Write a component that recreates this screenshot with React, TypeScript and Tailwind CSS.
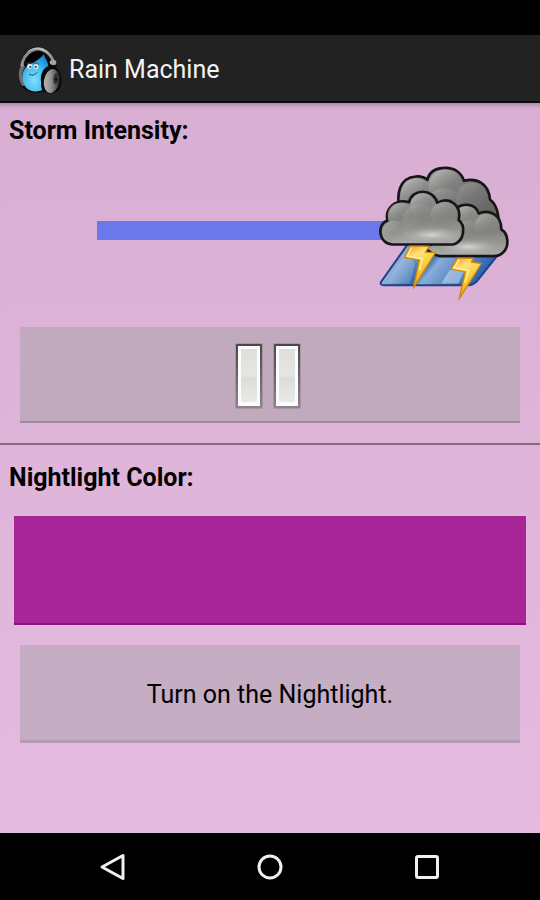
import React, { useState } from 'react';

function AppIcon() {
    return (
        <svg viewBox="24 15 138 144" className="h-12 w-[46px]" aria-hidden="true">
            <defs>
                <radialGradient id="drop" cx="0.45" cy="0.7" r="0.7">
                    <stop offset="0" stopColor="#84defc" />
                    <stop offset="0.5" stopColor="#4cc0f0" />
                    <stop offset="1" stopColor="#158cd0" />
                </radialGradient>
                <linearGradient id="band" x1="0" y1="0" x2="1" y2="0.4">
                    <stop offset="0" stopColor="#6a6a6a" />
                    <stop offset="0.5" stopColor="#b0b0b0" />
                    <stop offset="1" stopColor="#8a8a8a" />
                </linearGradient>
                <linearGradient id="ear" x1="0" y1="0.6" x2="1" y2="0.3">
                    <stop offset="0" stopColor="#b4b4b4" />
                    <stop offset="0.4" stopColor="#969696" />
                    <stop offset="1" stopColor="#2c2c2c" />
                </linearGradient>
            </defs>
            <path d="M36 132 C20 100 32 74 42 64 C48 30 88 10 118 32 C132 42 140 56 140 74 L104 152 C76 160 46 150 36 132Z" fill="#050505" />
            <path d="M42 66 C26 82 24 112 40 136 L50 132 C38 108 38 92 48 78Z" fill="#6d6d6d" />
            <path d="M104 40 C110 56 120 66 118 82 C104 94 90 128 100 148 C78 156 54 150 46 132 C36 114 40 86 54 76 C72 66 92 56 104 40Z" fill="url(#drop)" />
            <path d="M42 68 C48 32 84 12 112 34 C128 46 134 58 136 78" fill="none" stroke="#111" strokeWidth="16" />
            <path d="M38 76 C44 30 84 12 112 32 C127 44 134 56 136 72" fill="none" stroke="url(#band)" strokeWidth="9" />
            <path d="M56 32 C72 18 98 18 116 36" fill="none" stroke="#c4c4c4" strokeWidth="3" />
            <ellipse cx="132" cy="64" rx="10" ry="8" fill="#a4a4a4" />
            <path d="M96 122 C92 94 110 70 132 74 C158 80 166 128 148 148 C134 162 106 160 100 144Z" fill="#0a0a0a" />
            <ellipse cx="128" cy="120" rx="23" ry="36" transform="rotate(10 128 120)" fill="url(#ear)" />
            <ellipse cx="142" cy="112" rx="9" ry="17" transform="rotate(10 142 112)" fill="#333" />
            <ellipse cx="141" cy="115" rx="3" ry="5" fill="#111" />
            <ellipse cx="62" cy="76" rx="8" ry="8" fill="#cfe6ee" />
            <ellipse cx="81" cy="77" rx="7" ry="8" fill="#cfe6ee" />
            <circle cx="64" cy="78" r="3" fill="#333" />
            <circle cx="80" cy="78" r="3" fill="#333" />
            <path d="M52 69 Q60 62 69 68 M75 68 Q84 62 90 70" fill="none" stroke="#0f5f8c" strokeWidth="3" />
            <path d="M60 99 Q74 108 84 94" fill="none" stroke="#1d4e6e" strokeWidth="3" />
        </svg>
    );
}

function StormCloud() {
    return (
        <svg viewBox="24 24 390 405" className="h-[135px] w-[130px] overflow-visible" aria-hidden="true">
            <defs>
                <linearGradient id="back" x1="0" y1="0" x2="0.8" y2="1">
                    <stop offset="0" stopColor="#a8a8a6" />
                    <stop offset="0.45" stopColor="#7b7c79" />
                    <stop offset="1" stopColor="#5c5d5a" />
                </linearGradient>
                <linearGradient id="front" x1="0" y1="0" x2="0" y2="1">
                    <stop offset="0" stopColor="#8f908d" />
                    <stop offset="0.5" stopColor="#82837f" />
                    <stop offset="1" stopColor="#acacaa" />
                </linearGradient>
                <linearGradient id="puff" x1="0" y1="0" x2="0.7" y2="1">
                    <stop offset="0" stopColor="#d2d2d0" stopOpacity="0.8" />
                    <stop offset="0.6" stopColor="#858683" stopOpacity="0.4" />
                    <stop offset="1" stopColor="#777875" stopOpacity="0" />
                </linearGradient>
                <radialGradient id="glow">
                    <stop offset="0" stopColor="#dcdcdc" stopOpacity="0.9" />
                    <stop offset="1" stopColor="#b0b0b0" stopOpacity="0" />
                </radialGradient>
                <linearGradient id="rain" x1="0" y1="0" x2="1" y2="0.3">
                    <stop offset="0" stopColor="#4676b4" />
                    <stop offset="0.28" stopColor="#8fb0da" />
                    <stop offset="0.5" stopColor="#3568ac" />
                    <stop offset="0.58" stopColor="#88add9" />
                    <stop offset="1" stopColor="#2a63b0" />
                </linearGradient>
                <linearGradient id="bolt" x1="0" y1="0" x2="0.4" y2="1">
                    <stop offset="0" stopColor="#f08c14" />
                    <stop offset="0.3" stopColor="#ffe27a" />
                    <stop offset="0.6" stopColor="#f8cc34" />
                    <stop offset="1" stopColor="#dba514" />
                </linearGradient>
            </defs>

            {/* rain sheet */}
            <path d="M116 262 L34 378 Q28 389 42 389 L296 389 Q308 389 320 378 L382 300 L300 262Z" fill="url(#rain)" stroke="#1c438a" strokeWidth="6" />
            <path d="M62 362 L112 290 L135 325 L120 384 L50 384Z" fill="#bfd5ee" opacity="0.25" />
            <path d="M215 384 Q235 340 270 318 L285 345 L265 384Z" fill="#d8e6f6" opacity="0.5" />

            {/* back cloud */}
            <path d="M90 165 C78 120 86 66 138 63 C152 62 164 66 172 73 C178 48 200 37 227 37 C254 37 274 52 282 76 C320 66 356 84 360 132 C378 146 388 170 386 215 L300 250 L120 220Z" fill="url(#back)" stroke="#161616" strokeWidth="8" strokeLinejoin="round" />
            <circle cx="137" cy="113" r="44" fill="url(#puff)" />
            <circle cx="226" cy="92" r="50" fill="url(#puff)" />
            <circle cx="305" cy="128" r="46" fill="url(#puff)" opacity="0.4" />
            <circle cx="223" cy="152" r="54" fill="url(#puff)" opacity="0.5" />

            {/* front right cloud */}
            <path d="M255 170 C260 152 278 147 294 148 C312 150 322 160 326 174 C354 162 394 174 394 222 C416 234 418 274 400 290 C392 299 382 302 370 302 L210 302 C192 300 178 290 166 278 L230 235Z" fill="url(#front)" stroke="#161616" strokeWidth="8" strokeLinejoin="round" />
            <ellipse cx="295" cy="274" rx="95" ry="24" fill="url(#glow)" />
            <circle cx="291" cy="185" r="33" fill="url(#puff)" />
            <circle cx="352" cy="213" r="38" fill="url(#puff)" opacity="0.7" />
            <circle cx="296" cy="230" r="36" fill="url(#puff)" opacity="0.5" />

            {/* front left cloud */}
            <path d="M66 267 C24 262 20 206 52 196 C44 160 76 128 117 140 C126 98 190 98 202 142 C240 122 276 150 266 194 C286 208 286 256 250 267Z" fill="url(#front)" stroke="#161616" strokeWidth="8" strokeLinejoin="round" />
            <ellipse cx="185" cy="238" rx="95" ry="24" fill="url(#glow)" />
            <circle cx="91" cy="180" r="38" fill="url(#puff)" />
            <circle cx="159" cy="151" r="38" fill="url(#puff)" />
            <circle cx="222" cy="179" r="40" fill="url(#puff)" opacity="0.6" />
            <circle cx="72" cy="229" r="33" fill="url(#puff)" opacity="0.7" />
            <circle cx="148" cy="197" r="51" fill="url(#puff)" opacity="0.4" />

            <path d="M120 272 L103 306 L148 314 L130 398 L196 292 L166 290 L178 272Z" fill="url(#bolt)" stroke="#cf8710" strokeWidth="4" strokeLinejoin="round" />
            <path d="M125 276 L112 302 L158 309 L148 345" fill="none" stroke="#fff2a8" strokeWidth="4" />
            <path d="M262 308 L243 341 L286 349 L267 431 L334 324 L304 320 L310 308Z" fill="url(#bolt)" stroke="#cf8710" strokeWidth="4" strokeLinejoin="round" />
            <path d="M268 311 L252 337 L296 344 L285 382" fill="none" stroke="#fff2a8" strokeWidth="4" />
        </svg>
    );
}

function PauseIcon() {
    return (
        <svg viewBox="0 0 66 66" className="size-[66px]" aria-hidden="true">
            <defs>
                <linearGradient id="rim" x1="0" y1="0" x2="0" y2="1">
                    <stop offset="0" stopColor="#4a474a" />
                    <stop offset="1" stopColor="#8f858f" />
                </linearGradient>
                <linearGradient id="face" x1="0" y1="0" x2="0" y2="1">
                    <stop offset="0" stopColor="#dedfdc" />
                    <stop offset="0.5" stopColor="#e6e7e4" />
                    <stop offset="0.55" stopColor="#dcddda" />
                    <stop offset="1" stopColor="#e9eae8" />
                </linearGradient>
            </defs>
            {[1, 39].map(x => (
                <g key={x}>
                    <rect x={x - 1} y="0" width="28" height="66" rx="2" fill="#8d7f8c" opacity="0.5" />
                    <rect x={x} y="1" width="26" height="64" rx="1" fill="url(#rim)" />
                    <rect x={x + 2} y="3" width="22" height="60" fill="#fcfdfb" />
                    <rect x={x + 5} y="6" width="16" height="53" fill="url(#face)" />
                </g>
            ))}
        </svg>
    );
}

function PlayIcon() {
    return (
        <svg viewBox="0 0 66 66" className="size-[66px]" aria-hidden="true">
            <path d="M10 3 L60 33 L10 63Z" fill="#e6e7e4" stroke="#5a555a" strokeWidth="3" />
        </svg>
    );
}

function NavBar() {
    return (
        <nav className="grid h-[67px] grid-cols-3 items-center justify-items-center bg-black px-[34px] text-[#f0f0f0]">
            <button type="button" aria-label="Back">
                <svg viewBox="0 0 28 28" className="size-7" fill="none" stroke="currentColor" strokeWidth="3" strokeLinejoin="round">
                    <path d="M3 14 L24 2.5 V25.5Z" />
                </svg>
            </button>
            <button type="button" aria-label="Home">
                <svg viewBox="0 0 28 28" className="size-7" fill="none" stroke="currentColor" strokeWidth="3">
                    <circle cx="14" cy="14" r="11" />
                </svg>
            </button>
            <button type="button" aria-label="Recent apps">
                <svg viewBox="0 0 28 28" className="size-7" fill="none" stroke="currentColor" strokeWidth="3">
                    <rect x="3.5" y="3.5" width="21" height="21" rx="1.5" />
                </svg>
            </button>
        </nav>
    );
}

export default function App() {
    const [intensity, setIntensity] = useState(100);
    const [playing, setPlaying] = useState(true);
    const [nightlight, setNightlight] = useState(false);

    return (
        <div className="flex min-h-screen flex-col bg-black font-['Roboto',sans-serif] text-[25px] leading-8 text-black">
            {/* System status bar */}
            <div className="h-[35px] bg-black" />

            <header className="flex h-[68px] items-center gap-1.5 border-b-2 border-[#0c0c0c] bg-[#222222] pt-1 pl-[17px]">
                <AppIcon />
                <h1 className="text-[#f3f3f3]">Rain Machine</h1>
            </header>

            <main className="flex-1 bg-linear-to-b from-[#d8aed2] to-[#e5bbe0] shadow-[inset_0_6px_4px_-4px_rgba(0,0,0,0.25)]">
                <section className="border-b-2 border-[#846a84] pt-3 pb-5">
                    <label htmlFor="intensity" className="block px-[9px] font-bold">
                        Storm Intensity:
                    </label>

                    <div className="relative mt-4 flex h-[135px] items-center px-[97px]">
                        <div className="h-[19px] w-full">
                            <div className="relative h-full bg-[#6b78ea]" style={{ width: `${intensity}%` }}>
                                {/* thumb */}
                                <div className="absolute top-1/2 right-0 translate-x-1/2 -translate-y-1/2">
                                    <StormCloud />
                                </div>
                            </div>
                        </div>
                        <input
                            id="intensity"
                            type="range"
                            min={0}
                            max={100}
                            value={intensity}
                            onChange={(e) => setIntensity(Number(e.target.value))}
                            className="absolute inset-0 h-full w-full opacity-0"
                        />
                    </div>

                    <div className="mt-[29px] px-5">
                        <button
                            type="button"
                            aria-label={playing ? 'Pause' : 'Play'}
                            onClick={() => setPlaying(!playing)}
                            className="flex h-24 w-full items-center justify-center border-b-2 border-[#a08a9f] bg-[#c1a9be] pt-1 pr-1"
                        >
                            {playing ? <PauseIcon /> : <PlayIcon />}
                        </button>
                    </div>
                </section>

                <section className="pt-[17px]">
                    <h2 id="color-label" className="px-[9px] font-bold">
                        Nightlight Color:
                    </h2>
                    <div className="mt-[22px] px-[14px]">
                        <button
                            type="button"
                            aria-labelledby="color-label"
                            className="block h-[109px] w-full border-b-2 border-[#8f0f84] bg-[#a82598]"
                        />
                    </div>
                    <div className="mt-5 px-5 pb-5">
                        <button
                            type="button"
                            onClick={() => setNightlight(!nightlight)}
                            className="block h-[98px] w-full border-b-3 border-[#b49cb3] bg-[#c5adc3] pt-1"
                        >
                            {nightlight ? 'Turn off the Nightlight.' : 'Turn on the Nightlight.'}
                        </button>
                    </div>
                </section>
            </main>

            <NavBar />
        </div>
    );
}
